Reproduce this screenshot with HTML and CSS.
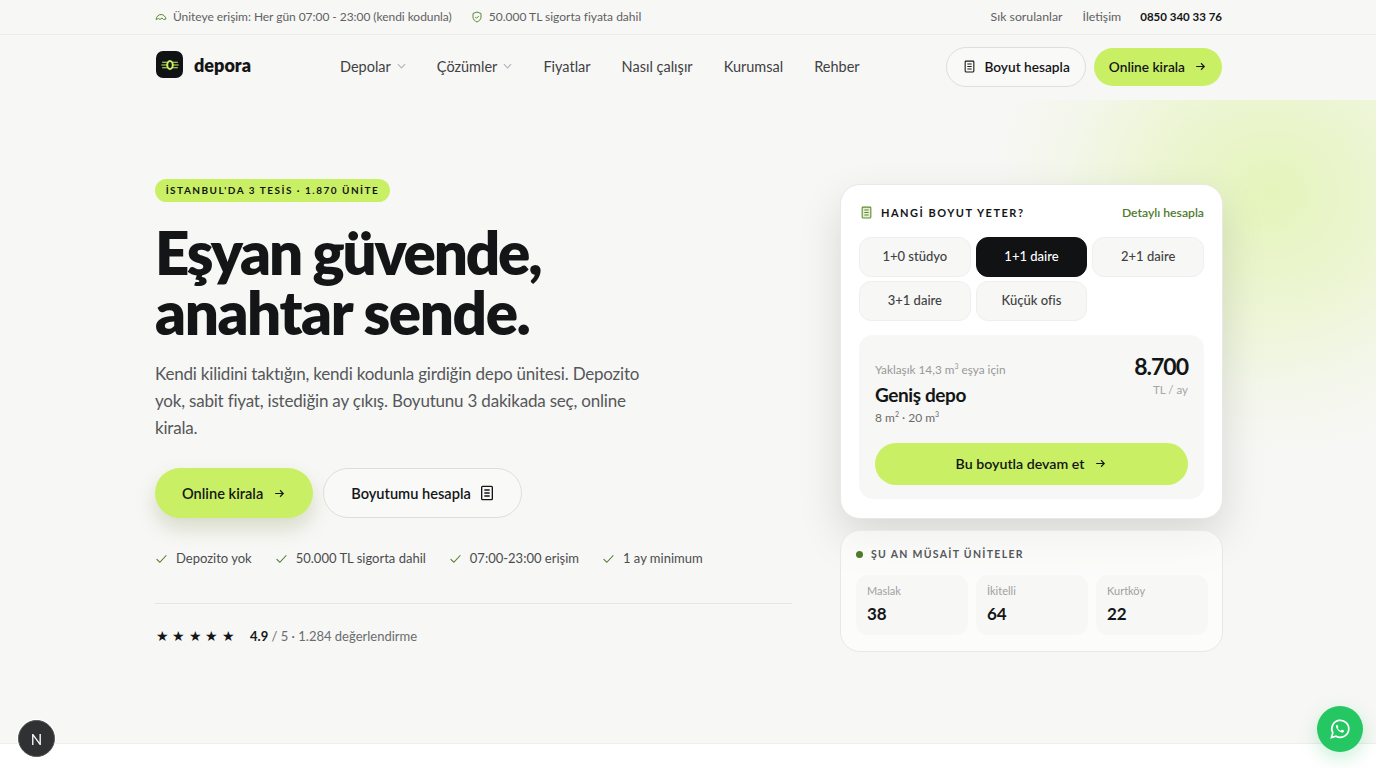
FILE: index.html
```html
<!DOCTYPE html>
<html lang="tr">
<head>
    <meta charset="UTF-8">
    <title>depora</title>
    <link rel="stylesheet" href="styles.css">
</head>
<body>
    <div class="topbar">
        <div class="wrap topbar-inner">
            <div class="top-group">
                <span class="top-item">
                    <svg class="top-icon" viewBox="0 0 24 24"><path d="M2 17c1-6 5-10 10-10s9 4 10 9l-5 1-3-3-4 3-3-2z"/></svg>
                    Üniteye erişim: Her gün 07:00 - 23:00 (kendi kodunla)
                </span>
                <span class="top-item">
                    <svg class="top-icon" viewBox="0 0 24 24"><path d="M12 2l8 3v7c0 5-3.500 8-8 10-4.500-2-8-5-8-10V5z"/><path d="M8.500 12l2.500 2.500 4.500-4.500"/></svg>
                    50.000 TL sigorta fiyata dahil
                </span>
            </div>
            <div class="top-links">
                <a>Sık sorulanlar</a>
                <a>İletişim</a>
                <a class="phone">0850 340 33 76</a>
            </div>
        </div>
    </div>

    <header class="header">
        <div class="wrap header-inner">
            <div class="logo">
                <span class="logo-mark">
                    <svg viewBox="0 0 28 28" width="22" height="22"><path class="logo-lines" d="M4 10.500h20M3 14h22M4 17.500h20"/><ellipse class="logo-ring" cx="14" cy="14" rx="3.500" ry="5"/></svg>
                </span>
                <span class="logo-name">depora</span>
            </div>
            <nav class="nav">
                <a>Depolar <svg class="chev" viewBox="0 0 10 6"><path d="M1 1l4 4 4-4"/></svg></a>
                <a>Çözümler <svg class="chev" viewBox="0 0 10 6"><path d="M1 1l4 4 4-4"/></svg></a>
                <a>Fiyatlar</a>
                <a>Nasıl çalışır</a>
                <a>Kurumsal</a>
                <a>Rehber</a>
            </nav>
            <div class="header-actions">
                <a class="btn btn-outline btn-sm">
                    <svg class="ico" viewBox="0 0 24 24"><rect x="4" y="2" width="16" height="20" rx="1.500"/><path d="M8 7.500h8M8 12h8M8 16.500h8"/></svg>
                    Boyut hesapla
                </a>
                <a class="btn btn-lime btn-sm btn-thin">
                    Online kirala
                    <svg class="ico" viewBox="0 0 24 24"><path d="M4 12h15M13 6l6 6-6 6"/></svg>
                </a>
            </div>
        </div>
    </header>

    <section class="hero">
        <div class="glow"></div>
        <div class="wrap hero-inner">
            <div class="hero-left">
                <span class="badge">İSTANBUL'DA 3 TESİS · 1.870 ÜNİTE</span>
                <h1><span class="line-one">Eşyan güvende,</span><span class="line-two">anahtar sende.</span></h1>
                <p class="lead">Kendi kilidini taktığın, kendi kodunla girdiğin depo ünitesi. Depozito yok, sabit fiyat, istediğin ay çıkış. Boyutunu 3 dakikada seç, online kirala.</p>
                <div class="cta-row">
                    <a class="btn btn-lime btn-lg btn-shadow">
                        Online kirala
                        <svg class="ico" viewBox="0 0 24 24"><path d="M4 12h15M13 6l6 6-6 6"/></svg>
                    </a>
                    <a class="btn btn-outline btn-lg btn-calc">
                        Boyutumu hesapla
                        <svg class="ico ico-lg" viewBox="0 0 24 24"><rect x="4" y="2" width="16" height="20" rx="1.500"/><path d="M8 7.500h8M8 12h8M8 16.500h8"/></svg>
                    </a>
                </div>
                <ul class="checks">
                    <li><svg class="check" viewBox="0 0 24 24"><path d="M3 13l6 6L21 6"/></svg>Depozito yok</li>
                    <li><svg class="check" viewBox="0 0 24 24"><path d="M3 13l6 6L21 6"/></svg>50.000 TL sigorta dahil</li>
                    <li><svg class="check" viewBox="0 0 24 24"><path d="M3 13l6 6L21 6"/></svg>07:00-23:00 erişim</li>
                    <li><svg class="check" viewBox="0 0 24 24"><path d="M3 13l6 6L21 6"/></svg>1 ay minimum</li>
                </ul>
                <div class="rating">
                    <span class="stars">★★★★★</span>
                    <span><b>4.9</b> / 5 · 1.284 değerlendirme</span>
                </div>
            </div>

            <div class="hero-right">
                <div class="card calc">
                    <div class="calc-head">
                        <span class="calc-title">
                            <svg class="calc-icon" viewBox="0 0 24 24"><rect x="4" y="2" width="16" height="20" rx="1.500"/><path d="M8 7.500h8M8 12h8M8 16.500h8"/></svg>
                            HANGİ BOYUT YETER?
                        </span>
                        <a class="calc-link">Detaylı hesapla</a>
                    </div>
                    <div class="options">
                        <button>1+0 stüdyo</button>
                        <button class="active">1+1 daire</button>
                        <button>2+1 daire</button>
                        <button>3+1 daire</button>
                        <button>Küçük ofis</button>
                    </div>
                    <div class="result">
                        <div class="result-top">
                            <div>
                                <div class="result-note">Yaklaşık 14,3 m<sup>3</sup> eşya için</div>
                                <div class="result-name">Geniş depo</div>
                                <div class="result-size">8 m<sup>2</sup> · 20 m<sup>3</sup></div>
                            </div>
                            <div class="result-price">
                                <div class="price">8.700</div>
                                <div class="price-unit">TL / ay</div>
                            </div>
                        </div>
                        <a class="btn btn-lime btn-wide">
                            Bu boyutla devam et
                            <svg class="ico" viewBox="0 0 24 24"><path d="M4 12h15M13 6l6 6-6 6"/></svg>
                        </a>
                    </div>
                </div>
                <div class="card avail">
                    <div class="avail-title"><span class="dot"></span>ŞU AN MÜSAİT ÜNİTELER</div>
                    <div class="stats">
                        <div class="stat"><span>Maslak</span><b>38</b></div>
                        <div class="stat"><span>İkitelli</span><b>64</b></div>
                        <div class="stat"><span>Kurtköy</span><b>22</b></div>
                    </div>
                </div>
            </div>
        </div>
    </section>

    <div class="next-section"></div>

    <a class="dev-badge">N</a>
    <a class="whatsapp">
        <svg viewBox="0 0 24 24" width="24" height="24"><path class="wa-ring" d="M3.500 20.500l1.300-4.600A8.500 8.500 0 1 1 8 19.200z"/><path class="wa-phone" d="M9.100 7.700c-.3 0-.8.300-1 .9-.3 1 0 2.200 1.100 3.700 1.300 1.800 2.900 2.900 4.500 3.300 1 .2 1.900-.3 2.200-1 .2-.5.200-.9.100-1l-1.900-.9c-.2-.1-.3 0-.4.100l-.7.900c-.1.100-.3.200-.5.100-1.200-.5-2.100-1.300-2.800-2.500-.1-.2-.1-.3 0-.4l.6-.7c.1-.2.100-.3 0-.5l-.8-1.800c-.1-.2-.2-.2-.4-.2z"/></svg>
    </a>
</body>
</html>
```

FILE: styles.css
```css
* {
    box-sizing: border-box;
}
html, body {
    height: 768px;
    overflow: hidden;
}
body {
    margin: 0;
    font-family: "Lato", "Noto Sans", sans-serif;
    color: #141517;
    background-color: #f7f7f5;
}
a {
    color: inherit;
    text-decoration: none;
}
.wrap {
    width: 1068px;
    margin: 0 0 0 155px;
}

/* top bar */
.topbar {
    height: 35px;
    border-bottom: 1px solid #ececea;
    font-size: 12px;
    color: #5f6163;
}
.topbar-inner {
    height: 33px;
    display: flex;
    align-items: center;
    justify-content: space-between;
}
.top-group {
    display: flex;
    gap: 19px;
}
.top-item {
    display: flex;
    align-items: center;
    gap: 6px;
}
.top-item:first-child {
    letter-spacing: -0.050px;
}
.top-icon {
    width: 12px;
    height: 12px;
    fill: none;
    stroke: #5c8a33;
    stroke-width: 2;
}
.top-links {
    display: flex;
    gap: 20px;
    font-size: 12.300px;
    padding-right: 1px;
}
.phone {
    margin-left: -1px;
    color: #141517;
    font-size: 11.500px;
    font-weight: 700;
    line-height: 15px;
}

/* header */
.header {
    height: 65px;
}
.header-inner {
    height: 64px;
    display: flex;
    align-items: center;
}
.logo {
    display: flex;
    align-items: center;
    gap: 11px;
    width: 185px;
    margin-top: -5px;
}
.logo-mark {
    width: 27px;
    height: 27px;
    margin-left: 1px;
    border-radius: 7px;
    background-color: #111214;
    display: flex;
    align-items: center;
    justify-content: center;
}
.logo-lines {
    fill: none;
    stroke: #c8f063;
    stroke-width: 1.500;
}
.logo-ring {
    fill: #111214;
    stroke: #c8f063;
    stroke-width: 2.500;
}
.logo-name {
    font-size: 18px;
    font-weight: 800;
}
.nav {
    display: flex;
    gap: 31px;
    margin-top: -2px;
    font-size: 14.500px;
    color: #3f4143;
}
.nav a {
    display: flex;
    align-items: center;
    gap: 6px;
}
.chev {
    width: 9px;
    height: 6px;
    fill: none;
    stroke: #b5b6b6;
    stroke-width: 1.300;
}
.header-actions {
    margin-left: auto;
    margin-right: 1px;
    display: flex;
    align-items: center;
    gap: 8px;
}

/* buttons */
.btn {
    display: flex;
    align-items: center;
    justify-content: center;
    border-radius: 999px;
    font-weight: 600;
    color: #141517;
}
.btn-lime {
    background-color: #c9f064;
}
.btn-outline {
    border: 1px solid #dededc;
    background-color: #f9f9f8;
}
.btn-sm {
    height: 40px;
    font-size: 13.700px;
    gap: 8px;
    padding: 0 15px 1px 16px;
}
.btn-thin {
    height: 38px;
    gap: 9px;
    padding: 0 15px 1px;
}
.btn-lg {
    height: 50px;
    font-size: 14.600px;
    gap: 10px;
    padding: 0 27px;
}
.btn-calc {
    gap: 8px;
    padding: 0 26px 0 27px;
}
.btn-shadow {
    box-shadow: 0 10px 20px rgba(100, 120, 40, 0.22);
}
.btn-wide {
    height: 42px;
    font-size: 14.200px;
    gap: 10px;
    padding-bottom: 2px;
}
.ico {
    width: 13px;
    height: 13px;
    fill: none;
    stroke: currentColor;
    stroke-width: 2;
}
.ico-lg {
    width: 16px;
    height: 16px;
}

/* hero */
.hero {
    position: relative;
    height: 643px;
    overflow: hidden;
}
.glow {
    position: absolute;
    top: -165px;
    right: -174px;
    width: 560px;
    height: 520px;
    background: radial-gradient(closest-side, rgba(201, 240, 100, 0.4) 0%, rgba(201, 240, 100, 0.24) 40%, rgba(201, 240, 100, 0.07) 75%, rgba(201, 240, 100, 0) 100%);
}
.hero-inner {
    position: relative;
    display: flex;
    justify-content: space-between;
}
.hero-left {
    width: 637px;
    padding-top: 79px;
}
.badge {
    display: block;
    width: 235px;
    height: 23px;
    line-height: 23px;
    text-align: center;
    border-radius: 999px;
    background-color: #c9f064;
    font-size: 10px;
    font-weight: 700;
    letter-spacing: 1.500px;
}
h1 {
    margin: 20px 0 0;
    font-size: 60px;
    line-height: 60px;
    font-weight: 800;
}
h1 span {
    display: block;
}
.line-one {
    letter-spacing: -2.200px;
}
.line-two {
    letter-spacing: -1.400px;
}
.lead {
    margin: 18px 0 0;
    width: 500px;
    font-size: 17px;
    letter-spacing: -0.200px;
    line-height: 27px;
    color: #55575a;
}
.cta-row {
    display: flex;
    gap: 10px;
    margin-top: 27px;
}
.checks {
    list-style: none;
    margin: 32px 0 0;
    padding: 0;
    display: flex;
    gap: 23px;
    font-size: 13px;
    color: #4a4c4e;
}
.checks li {
    display: flex;
    align-items: center;
    gap: 8px;
}
.check {
    width: 13px;
    height: 13px;
    fill: none;
    stroke: #4f7a2a;
    stroke-width: 2;
}
.rating {
    margin-top: 37px;
    padding-top: 23px;
    border-top: 1px solid #e6e6e4;
    display: flex;
    align-items: center;
    gap: 12px;
    font-size: 13px;
    color: #6a6c6e;
}
.rating b {
    color: #141517;
    font-weight: 700;
}
.stars {
    font-size: 14px;
    letter-spacing: 3.400px;
    color: #141517;
    padding-left: 1px;
}

/* right column */
.hero-right {
    width: 383px;
    padding-top: 84px;
    display: flex;
    flex-direction: column;
    gap: 11px;
}
.card {
    border: 1px solid #e8e8e6;
    border-radius: 20px;
    background-color: #ffffff;
}
.calc {
    height: 335px;
    padding: 20px 18px 19px;
    box-shadow: 0 18px 44px rgba(0, 0, 0, 0.13);
}
.calc-head {
    display: flex;
    justify-content: space-between;
    align-items: center;
    padding: 0 0 0 1px;
}
.calc-title {
    display: flex;
    align-items: center;
    gap: 8px;
    font-size: 11px;
    font-weight: 700;
    letter-spacing: 1.500px;
}
.calc-icon {
    width: 13px;
    height: 13px;
    fill: #e6f0d0;
    stroke: #5c8a33;
    stroke-width: 2;
}
.calc-link {
    font-size: 12.200px;
    font-weight: 600;
    color: #4f7a2a;
}
.options {
    display: grid;
    grid-template-columns: repeat(3, 1fr);
    gap: 4px 5px;
    margin-top: 17px;
}
.options button {
    height: 40px;
    padding: 0 0 2px;
    border: 1px solid #efefed;
    border-radius: 12px;
    background-color: #f7f7f5;
    font-family: inherit;
    font-size: 13px;
    font-weight: 500;
    color: #3f4143;
}
.options .active {
    background-color: #111214;
    border-color: #111214;
    color: #ffffff;
}
.result {
    margin-top: 14px;
    height: 164px;
    padding: 16px;
    border-radius: 14px;
    background-color: #f7f7f5;
}
.result-top {
    display: flex;
    justify-content: space-between;
    height: 92px;
}
.result-note {
    margin-top: 11px;
    font-size: 11.800px;
    color: #98999a;
}
.result-name {
    margin-top: 6px;
    font-size: 19px;
    font-weight: 700;
    letter-spacing: -0.400px;
}
.result-size {
    margin-top: 4px;
    font-size: 12px;
    color: #6a6c6e;
}
sup {
    font-size: 7px;
    line-height: 0;
}
.result-price {
    text-align: right;
}
.price {
    margin-top: 1px;
    font-size: 23px;
    font-weight: 700;
    letter-spacing: -1px;
}
.price-unit {
    margin-top: 3px;
    font-size: 11.500px;
    color: #a5a6a7;
}
.avail {
    height: 122px;
    padding: 17px 15px 15px;
    background-color: rgba(255, 255, 255, 0.6);
}
.avail-title {
    display: flex;
    align-items: center;
    gap: 8px;
    font-size: 10.500px;
    font-weight: 700;
    letter-spacing: 1.300px;
    color: #55575a;
}
.dot {
    width: 7px;
    height: 7px;
    border-radius: 50%;
    background-color: #4f7a2a;
}
.stats {
    display: grid;
    grid-template-columns: repeat(3, 112px);
    gap: 8px;
    margin-top: 15px;
}
.stat {
    height: 60px;
    padding: 9px 11px;
    border-radius: 12px;
    background-color: #f7f7f5;
}
.stat span {
    display: block;
    font-size: 11px;
    color: #a0a1a2;
}
.stat b {
    display: block;
    margin-top: 6px;
    font-size: 17px;
}

.next-section {
    height: 25px;
    background-color: #ffffff;
    border-top: 1px solid #eeeeec;
}

/* floating buttons */
.dev-badge {
    position: fixed;
    left: 18px;
    bottom: 11px;
    width: 37px;
    height: 37px;
    border-radius: 50%;
    background-color: #303133;
    border: 1px solid #555;
    box-shadow: 0 0 0 1px #fff;
    color: #fff;
    font-size: 15px;
    font-weight: 400;
    display: flex;
    align-items: center;
    justify-content: center;
}
.whatsapp {
    position: fixed;
    right: 13px;
    bottom: 16px;
    width: 46px;
    height: 46px;
    border-radius: 50%;
    background-color: #25c763;
    box-shadow: 0 6px 18px rgba(37, 199, 99, 0.25);
    display: flex;
    align-items: center;
    justify-content: center;
}
.wa-ring {
    fill: none;
    stroke: #fff;
    stroke-width: 1.700;
}
.wa-phone {
    fill: #fff;
}
```
